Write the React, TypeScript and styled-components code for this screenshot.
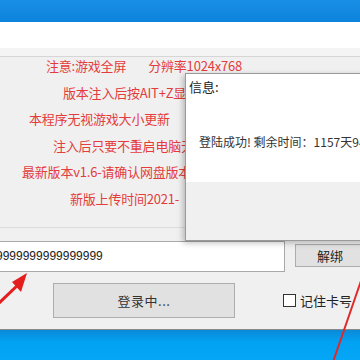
import styled, { createGlobalStyle } from 'styled-components';

const GlobalStyle = createGlobalStyle`
	html, body {
		margin: 0;
		padding: 0;
		background: #f0f0f0;
	}
	* {
		box-sizing: border-box;
	}
`;

const Screen = styled.div`
	position: relative;
	width: 360px;
	height: 360px;
	overflow: hidden;
	display: flex;
	flex-direction: column;
	font-family: "Noto Sans CJK SC", "Liberation Sans", sans-serif;
	background: #f0f0f0;
`;

const TitleBar = styled.div`
	height: 22px;
	background: linear-gradient(#1a8fe6, #0c84dc);
	flex-shrink: 0;
`;

const MenuStrip = styled.div`
	height: 26px;
	background: #ffffff;
	flex-shrink: 0;
`;

const TabBand = styled.div`
	height: 9px;
	background: #f4f4f4;
	border-bottom: 1px solid #d6d6d6;
	flex-shrink: 0;
`;

const Body = styled.div`
	flex: 1;
	display: flex;
	flex-direction: column;
	background: #f0f0f0;
	border-bottom: 1px solid #8a8a8a;
`;

const Notices = styled.div`
	margin-top: -4px;
	display: flex;
	flex-direction: column;
`;

const NoticeLine = styled.div<{ $indent: number }>`
	height: 26.6px;
	line-height: 26.6px;
	padding-left: ${p => p.$indent}px;
	font-size: 13px;
	color: #e43c3c;
	white-space: pre;
	letter-spacing: -0.2px;
`;

const Gap = styled.span<{ $w: number }>`
	display: inline-block;
	width: ${p => p.$w}px;
`;

const Separator = styled.div`
	margin-top: 14px;
	width: 185px;
	height: 1px;
	background: #dcdcdc;
`;

const KeyRow = styled.div`
	margin-top: 13px;
	display: flex;
	align-items: flex-start;
`;

const KeyInput = styled.div`
	flex-shrink: 0;
	width: 287px;
	height: 31px;
	margin-left: -2px;
	background: #ffffff;
	border: 1px solid #a9a9a9;
	font-family: "Liberation Sans", sans-serif;
	font-size: 12px;
	line-height: 29px;
	color: #222;
	text-indent: -3px;
`;

const SmallButton = styled.div`
	flex-shrink: 0;
	margin-left: 10px;
	margin-top: 3px;
	width: 80px;
	height: 23px;
	background: #e1e1e1;
	border: 1px solid #adadad;
	font-size: 13px;
	line-height: 21px;
	color: #222;
	padding-left: 21px;
`;

const ActionRow = styled.div`
	margin-top: 11px;
	display: flex;
	align-items: center;
	padding-left: 53px;
`;

const LoginButton = styled.div`
	flex-shrink: 0;
	width: 182px;
	height: 35px;
	background: #e1e1e1;
	border: 1px solid #adadad;
	font-size: 13px;
	color: #333;
	display: flex;
	align-items: center;
	justify-content: center;
	letter-spacing: 0.5px;
`;

const Remember = styled.label`
	margin-left: 48px;
	display: flex;
	align-items: center;
	gap: 4px;
	font-size: 13px;
	color: #222;
	white-space: nowrap;
`;

const Box = styled.span`
	width: 13px;
	height: 13px;
	background: #fff;
	border: 1px solid #333;
`;

const Desktop = styled.div`
	height: 30px;
	background: linear-gradient(#0a8ad8, #02a2f2 40%, #06a6f6);
	flex-shrink: 0;
`;

const Dialog = styled.div`
	position: absolute;
	left: 185px;
	top: 73px;
	width: 200px;
	height: 168px;
	display: flex;
	flex-direction: column;
	border: 1px solid #9a9a9a;
	box-shadow: -2px 2px 6px rgba(0, 0, 0, 0.25);
	background: #f0f0f0;
`;

const DialogMain = styled.div`
	height: 108px;
	background: #ffffff;
	padding: 4px 0 0 3px;
`;

const DialogTitle = styled.div`
	font-size: 13px;
	line-height: 18px;
	color: #222;
`;

const DialogMessage = styled.div`
	margin-top: 37px;
	padding-left: 10px;
	font-size: 12px;
	color: #333;
	white-space: nowrap;
`;

const Overlay = styled.svg`
	position: absolute;
	left: 0;
	top: 0;
	pointer-events: none;
`;

const notices = [
	{ text: '注意:游戏全屏', tail: '分辨率1024x768', indent: 46 },
	{ text: '版本注入后按AIT+Z显示隐藏', indent: 63 },
	{ text: '本程序无视游戏大小更新', indent: 29 },
	{ text: '注入后只要不重启电脑无需重复注入', indent: 53 },
	{ text: '最新版本v1.6-请确认网盘版本', indent: 22 },
	{ text: '新版上传时间2021-', indent: 70 },
];

const App = () => {
	return <>
		<GlobalStyle />
		<Screen>
			<TitleBar />
			<MenuStrip />
			<TabBand />
			<Body>
				<Notices>
					{notices.map(n => <NoticeLine key={n.text} $indent={n.indent}>
						{n.text}
						{n.tail && <><Gap $w={22} />{n.tail}</>}
					</NoticeLine>)}
				</Notices>
				<Separator />
				<KeyRow>
					<KeyInput>9999999999999999</KeyInput>
					<SmallButton>解绑</SmallButton>
				</KeyRow>
				<ActionRow>
					<LoginButton>登录中...</LoginButton>
					<Remember><Box />记住卡号</Remember>
				</ActionRow>
			</Body>
			<Desktop />
			<Dialog>
				<DialogMain>
					<DialogTitle>信息:</DialogTitle>
					<DialogMessage>登陆成功! 剩余时间：1157天9小时</DialogMessage>
				</DialogMain>
			</Dialog>
			<Overlay width="360" height="360" viewBox="0 0 360 360">
				<line x1="-4" y1="306" x2="20" y2="283" stroke="#e41e1e" strokeWidth="3" />
				<polygon points="27,273 12,282 21,292" fill="#e41e1e" />
				<line x1="333" y1="362" x2="362" y2="278" stroke="#e02a2a" strokeWidth="2" />
			</Overlay>
		</Screen>
	</>;
};

export default App;
